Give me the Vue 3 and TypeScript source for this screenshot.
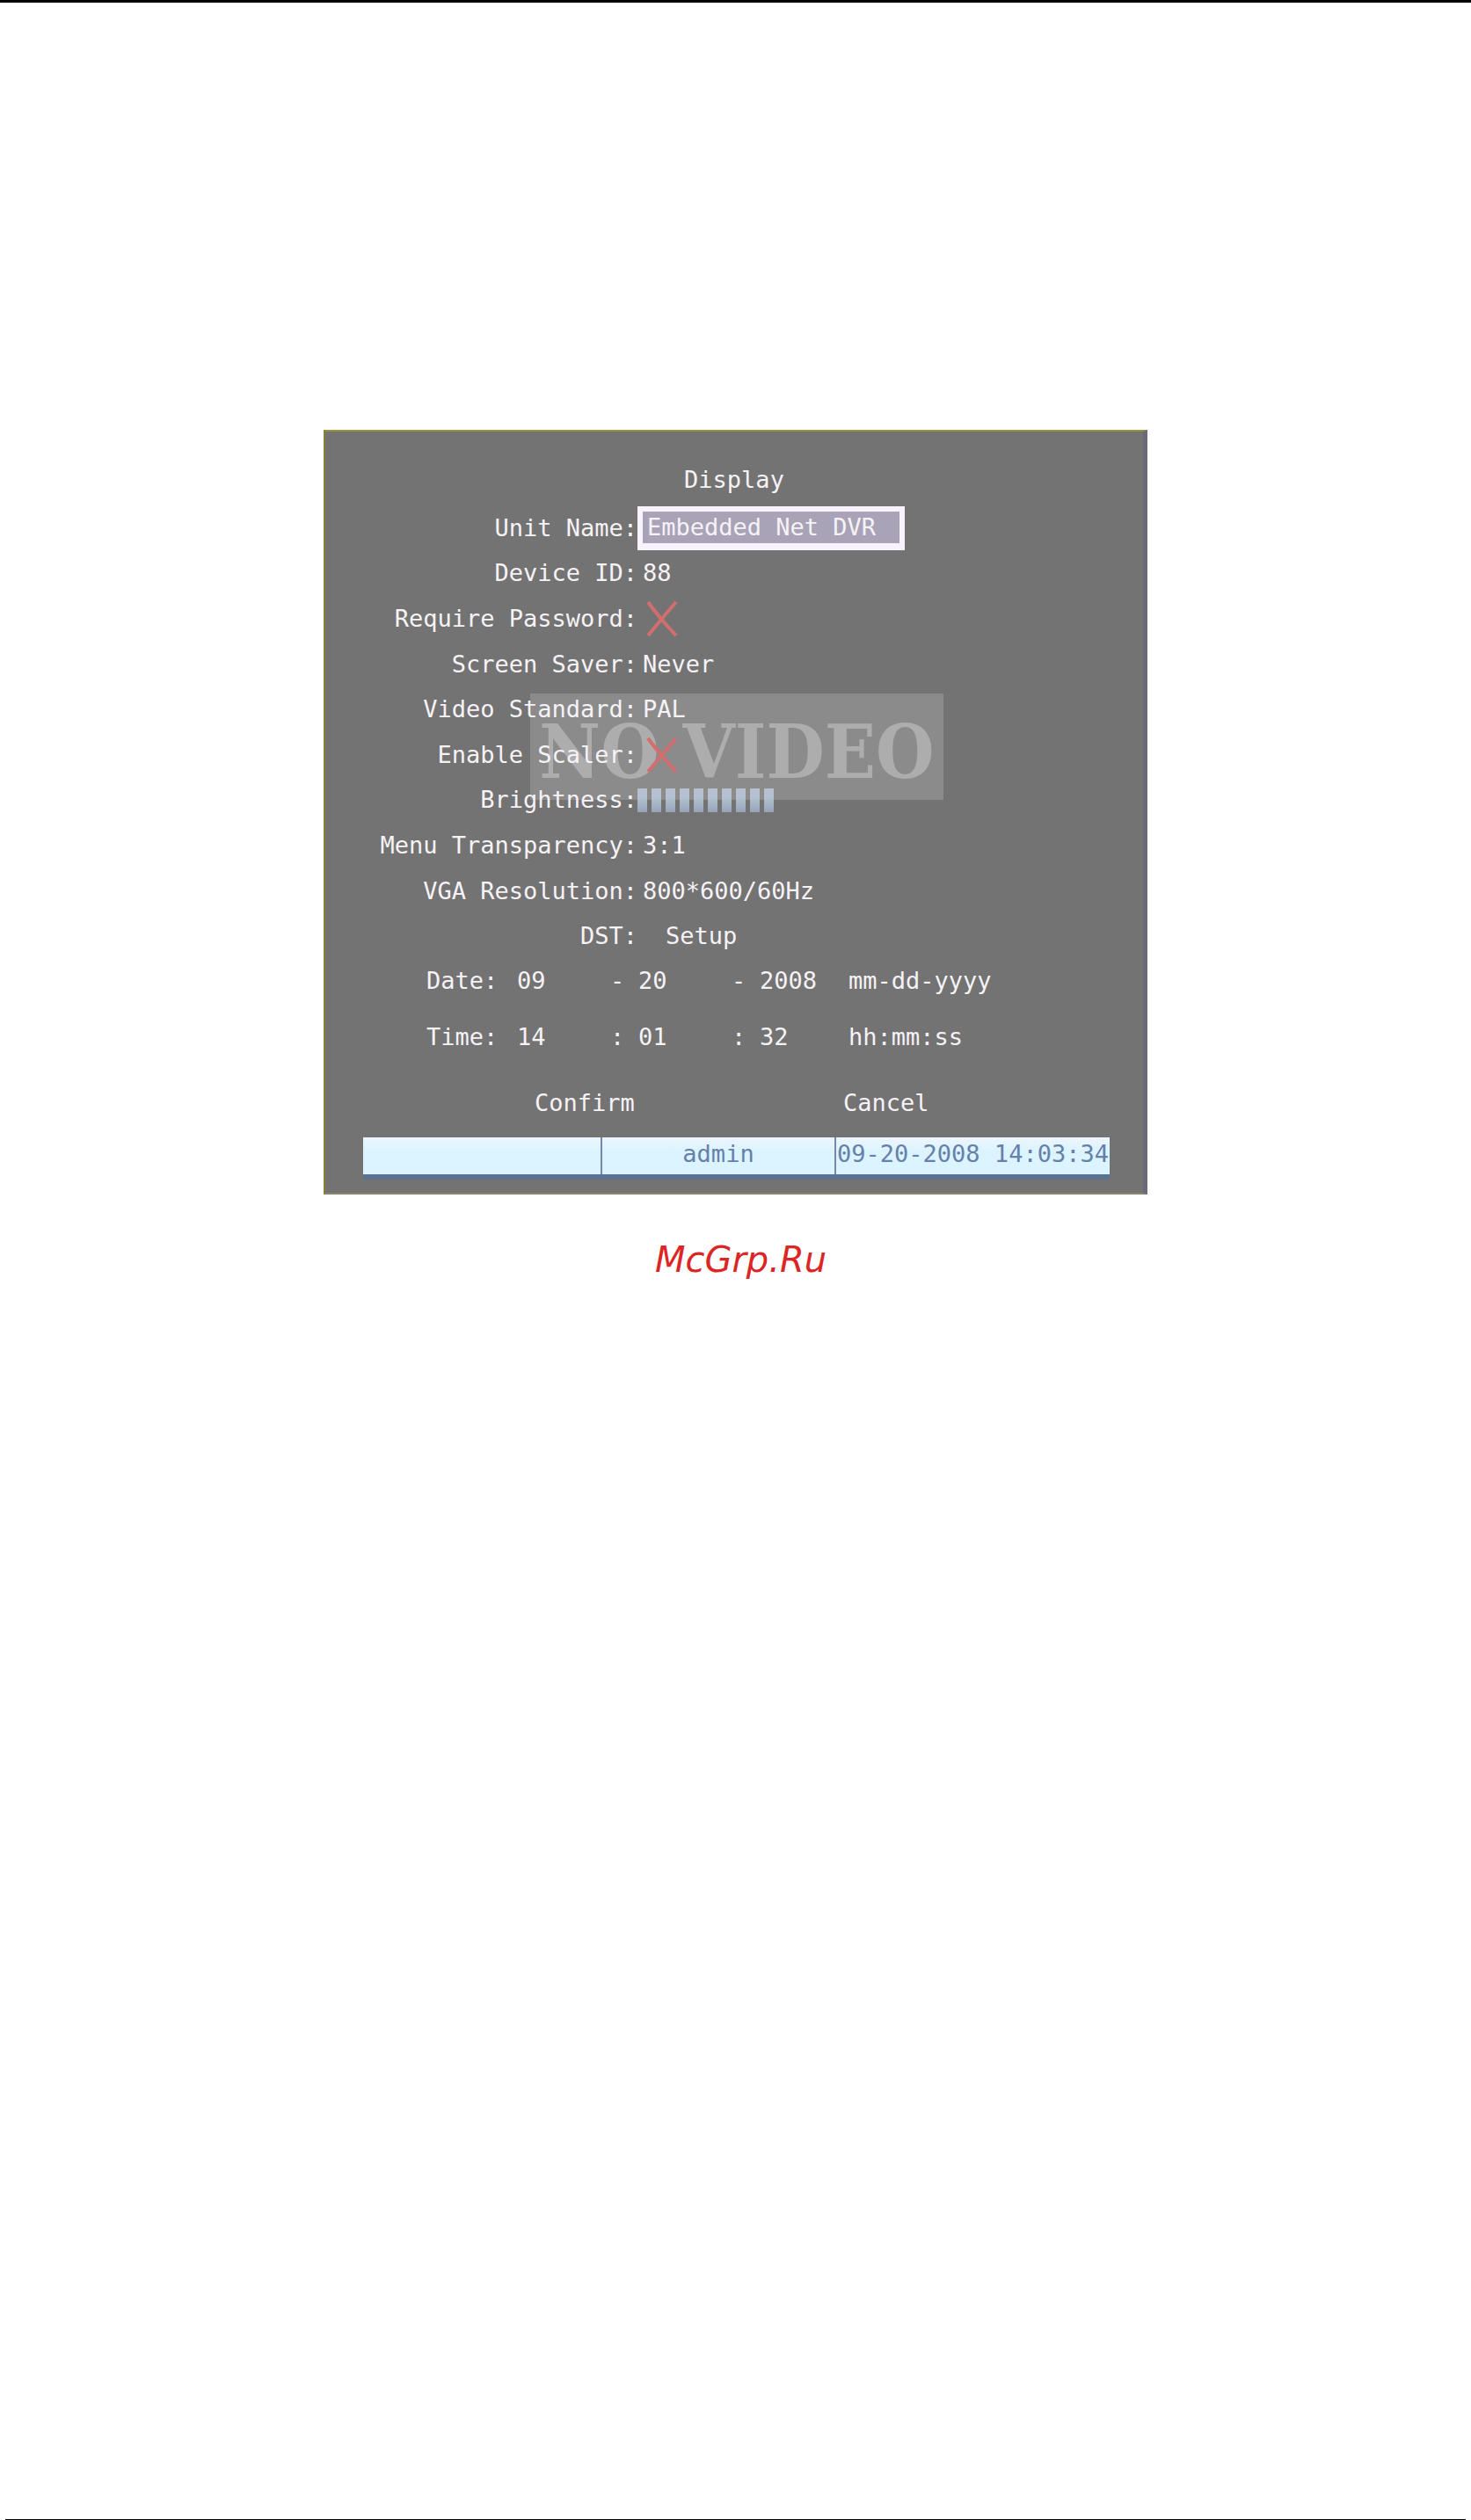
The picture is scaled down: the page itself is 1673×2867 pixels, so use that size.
<script setup lang="ts">
import { ref } from 'vue'

const unitName = ref('Embedded Net DVR')
const deviceId = ref('88')
const requirePassword = ref(false)
const screenSaver = ref('Never')
const videoStandard = ref('PAL')
const enableScaler = ref(false)
const brightness = ref(10)
const transparency = ref('3:1')
const resolution = ref('800*600/60Hz')

interface StampRow {
  label: string
  separator: string
  parts: string[]
  hint: string
}

const stamps = ref<StampRow[]>([
  { label: 'Date:', separator: '-', parts: ['09', '20', '2008'], hint: 'mm-dd-yyyy' },
  { label: 'Time:', separator: ':', parts: ['14', '01', '32'], hint: 'hh:mm:ss' },
])
</script>

<template>
  <main class="page">
    <form class="panel" @submit.prevent>
      <div class="watermark">NO VIDEO</div>

      <h1 class="title">Display</h1>

      <div class="settings">
        <label for="unit">Unit Name:</label>
        <input id="unit" v-model="unitName" class="unit" type="text" />

        <label for="device">Device ID:</label>
        <input id="device" v-model="deviceId" class="value" type="text" />

        <label for="password">Require Password:</label>
        <span class="tick">
          <input id="password" v-model="requirePassword" type="checkbox" />
          <svg viewBox="0 0 36 42" aria-hidden="true"><path d="M2 2 Q15 20 34 40 M34 2 Q20 18 2 40" /></svg>
        </span>

        <label for="saver">Screen Saver:</label>
        <select id="saver" v-model="screenSaver" class="value"><option>Never</option></select>

        <label for="standard">Video Standard:</label>
        <select id="standard" v-model="videoStandard" class="value"><option>PAL</option></select>

        <label for="scaler">Enable Scaler:</label>
        <span class="tick">
          <input id="scaler" v-model="enableScaler" type="checkbox" />
          <svg viewBox="0 0 36 42" aria-hidden="true"><path d="M2 2 Q15 20 34 40 M34 2 Q20 18 2 40" /></svg>
        </span>

        <label for="brightness">Brightness:</label>
        <span class="level">
          <input id="brightness" v-model.number="brightness" type="range" min="0" max="10" />
          <span class="bars"><i v-for="n in brightness" :key="n"></i></span>
        </span>

        <label for="transparency">Menu Transparency:</label>
        <select id="transparency" v-model="transparency" class="value"><option>3:1</option></select>

        <label for="resolution">VGA Resolution:</label>
        <select id="resolution" v-model="resolution" class="value"><option>800*600/60Hz</option></select>

        <label for="dst">DST:</label>
        <button id="dst" class="setup" type="button">Setup</button>
      </div>

      <div class="stamps">
        <div v-for="row in stamps" :key="row.label" class="stamp">
          <label :for="row.label">{{ row.label }}</label>
          <input :id="row.label" v-model="row.parts[0]" type="text" />
          <span>{{ row.separator }}</span>
          <input v-model="row.parts[1]" type="text" :aria-label="row.hint" />
          <span>{{ row.separator }}</span>
          <input v-model="row.parts[2]" type="text" :aria-label="row.hint" />
          <span>{{ row.hint }}</span>
        </div>
      </div>

      <div class="actions">
        <button type="submit">Confirm</button>
        <button type="button">Cancel</button>
      </div>

      <div class="status">
        <span></span>
        <span>admin</span>
        <span>09-20-2008 14:03:34</span>
      </div>
    </form>

    <a class="site" href="#">McGrp.Ru</a>
    <hr class="rule" />
  </main>
</template>

<style>
body {
  margin: 0;
  background: #fff;
}
</style>

<style scoped>
.page {
  box-sizing: border-box;
  min-height: 100vh;
  display: flex;
  flex-direction: column;
  align-items: center;
  border-top: 3px solid #000;
  padding-top: 486px;
}

.panel {
  position: relative;
  isolation: isolate;
  box-sizing: border-box;
  width: 100%;
  max-width: 937px;
  padding: 30px 0 15px;
  border: 2px solid #85822f;
  border-top-color: #96943a;
  border-right: 5px solid #6c6878;
  border-bottom-color: #87866a;
  background: #737373;
  color: #f6f2f6;
  font: 27px/50px "DejaVu Sans Mono", monospace;
  white-space: nowrap;
}

.panel input,
.panel select,
.panel button {
  box-sizing: border-box;
  min-width: 0;
  margin: 0;
  padding: 0;
  border: 0;
  border-radius: 0;
  background: none;
  color: inherit;
  font: inherit;
  text-align: left;
  appearance: none;
}

.watermark {
  position: absolute;
  z-index: -1;
  top: 298px;
  left: 233px;
  box-sizing: border-box;
  width: 470px;
  height: 121px;
  padding-top: 16px;
  background: #8b8b8b;
  color: #adadad;
  font: bold 85px/100px "DejaVu Serif Condensed", "DejaVu Serif", serif;
  text-align: center;
}

.title {
  margin: 0 0 4px;
  font: inherit;
  text-align: center;
}

.settings {
  display: grid;
  grid-template-columns: 355px 1fr;
  grid-template-rows: repeat(10, 1fr);
  align-items: center;
  height: 516px;
}

.settings label {
  text-align: right;
}

.panel .value {
  width: 260px;
  height: 50px;
  padding-left: 6px;
}

.panel .unit {
  width: 304px;
  height: 50px;
  padding-left: 5px;
  border: 6px solid #f8f2fc;
  border-bottom-width: 8px;
  background: #a9a3b8;
}

.tick,
.level {
  display: grid;
  justify-self: start;
  align-items: center;
}

.tick {
  width: 36px;
  margin-left: 10px;
}

.tick > *,
.level > * {
  grid-area: 1 / 1;
}

.tick input,
.level input {
  width: 100%;
  height: 42px;
  opacity: 0;
}

.tick svg {
  width: 36px;
  height: 42px;
  fill: none;
  stroke: #d26e6e;
  stroke-width: 4;
}

.bars {
  display: flex;
  gap: 5px;
}

.bars i {
  width: 11px;
  height: 27px;
  background: linear-gradient(#b5c1d0 35%, #94a5ba);
}

.panel .setup {
  justify-self: start;
  margin-left: 32px;
}

.stamps {
  display: grid;
  gap: 14px;
  padding-left: 115px;
}

.stamp {
  display: grid;
  grid-template-columns: 103px 106px 32px 106px 32px 101px 1fr;
}

.actions {
  display: grid;
  grid-template-columns: 351px 1fr;
  justify-items: start;
  margin: 25px 0 14px 238px;
}

.status {
  display: grid;
  grid-template-columns: 270fr 264fr 311fr;
  gap: 2px;
  margin: 0 38px 0 43px;
  border-bottom: 6px solid #5b7192;
  background: #7189ac;
  color: #6580aa;
  line-height: 38px;
  text-align: center;
}

.status span {
  height: 42px;
  background: linear-gradient(#eef5fd, #dcf4ff 35%);
}

.site {
  margin-top: 50px;
  padding-left: 12px;
  color: #dc2626;
  font: italic 40px/48px "DejaVu Sans", sans-serif;
  text-decoration: none;
}

.rule {
  align-self: stretch;
  margin: auto 6px 0;
  border: 0;
  border-top: 1px solid #000;
}
</style>
